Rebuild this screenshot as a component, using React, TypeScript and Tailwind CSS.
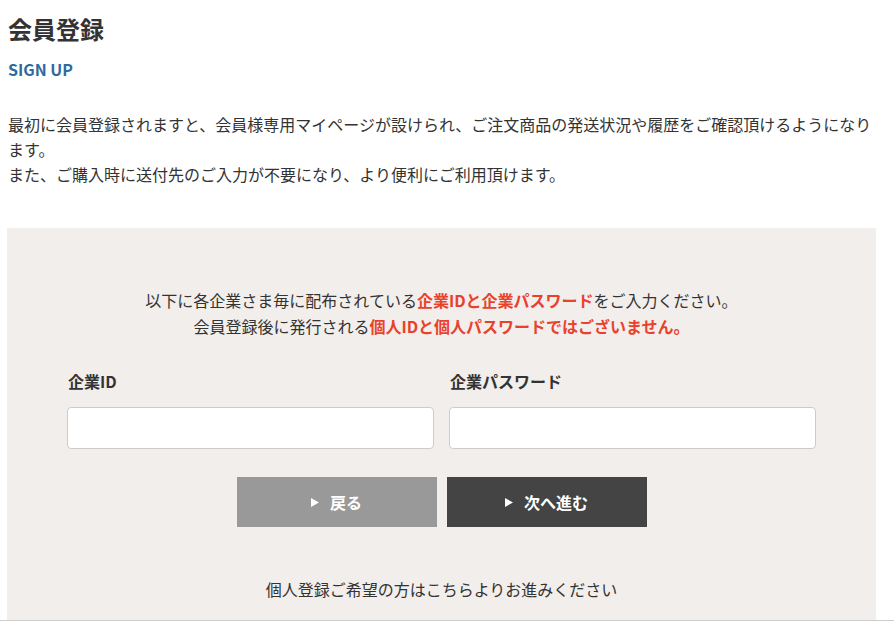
import React from "react";

const font = { fontFamily: '"Noto Sans CJK JP", "Noto Sans", sans-serif' };

function Tri() {
  return (
    <svg width="8" height="9" viewBox="0 0 8 9" className="mr-[11px] inline-block">
      <path d="M0 0 L8 4.5 L0 9 Z" fill="#ffffff" />
    </svg>
  );
}

export default function App() {
  return (
    <div
      className="h-[621px] overflow-hidden border-b border-[#cccccc] bg-white text-[#333333]"
      style={font}
    >
      <div className="pl-[8px] pt-[12px]">
        <h1 className="text-[24px] font-bold leading-[33px] text-[#333333]">会員登録</h1>
        <p className="mt-[12px] text-[16px] font-bold leading-[24px] text-[#2e6a9e]">SIGN UP</p>
        <div className="mt-[31px] w-[870px] text-[16px] leading-[25px] text-[#333333]">
          <p>
            最初に会員登録されますと、会員様専用マイページが設けられ、ご注文商品の発送状況や履歴をご確認頂けるようになります。
          </p>
          <p>また、ご購入時に送付先のご入力が不要になり、より便利にご利用頂けます。</p>
        </div>
      </div>
      <div className="ml-[7px] mt-[41px] w-[869px] bg-[#f2eeeb] px-[60px] pt-[59px] pb-[40px]">
        <div className="text-center text-[16px] leading-[26px] text-[#333333]">
          <p>
            以下に各企業さま毎に配布されている
            <span className="font-bold text-[#e8412c]">企業IDと企業パスワード</span>
            をご入力ください。
          </p>
          <p>
            会員登録後に発行される
            <span className="font-bold text-[#e8412c]">個人IDと個人パスワードではございません。</span>
          </p>
        </div>
        <div className="mt-[31px] grid grid-cols-2 gap-[15px]">
          <div>
            <label className="block pl-[1px] text-[16px] font-bold leading-[23px] text-[#333333]">企業ID</label>
            <input
              type="text"
              className="mt-[14px] block h-[42px] w-full rounded-[4px] border border-[#cccccc] bg-white px-3 outline-none"
            />
          </div>
          <div>
            <label className="block pl-[1px] text-[16px] font-bold leading-[23px] text-[#333333]">企業パスワード</label>
            <input
              type="password"
              className="mt-[14px] block h-[42px] w-full rounded-[4px] border border-[#cccccc] bg-white px-3 outline-none"
            />
          </div>
        </div>
        <div className="mt-[28px] flex justify-center gap-[10px]">
          <button className="flex h-[50px] w-[200px] items-center justify-center bg-[#999999] text-[16px] font-bold text-white">
            <Tri />
            戻る
          </button>
          <button className="flex h-[50px] w-[200px] items-center justify-center bg-[#444444] text-[16px] font-bold text-white">
            <Tri />
            次へ進む
          </button>
        </div>
        <p className="mt-[50px] text-center text-[16px] leading-[24px] text-[#333333]">
          個人登録ご希望の方はこちらよりお進みください
        </p>
      </div>
    </div>
  );
}
